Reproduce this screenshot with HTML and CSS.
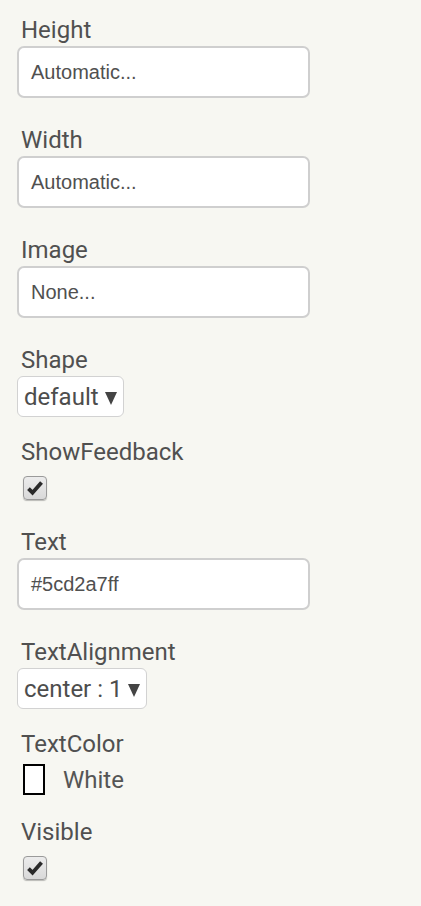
FILE: index.html
```html
<!DOCTYPE html>
<html>
<head>
<meta charset="utf-8">
<link rel="stylesheet" href="styles.css">
</head>
<body>
<div class="panel">
  <div class="prop">
    <div class="label">Height</div>
    <div class="textbox">Automatic...</div>
  </div>
  <div class="prop">
    <div class="label">Width</div>
    <div class="textbox">Automatic...</div>
  </div>
  <div class="prop">
    <div class="label">Image</div>
    <div class="textbox">None...</div>
  </div>
  <div class="prop prop-select">
    <div class="label">Shape</div>
    <div class="select">default<span class="arrow"></span></div>
  </div>
  <div class="prop">
    <div class="label">ShowFeedback</div>
    <div class="check"><svg viewBox="0 0 16 16" width="18" height="18"><path d="M2.2 8.6 L5.8 12.2 L13.8 3.2" fill="none" stroke="#2a2a2a" stroke-width="3.4" stroke-linecap="butt" stroke-linejoin="miter"/></svg></div>
  </div>
  <div class="prop">
    <div class="label">Text</div>
    <div class="textbox">#5cd2a7ff</div>
  </div>
  <div class="prop prop-select">
    <div class="label">TextAlignment</div>
    <div class="select">center : 1<span class="arrow"></span></div>
  </div>
  <div class="prop prop-color">
    <div class="label">TextColor</div>
    <div class="color"><span class="swatch"></span><span class="color-name">White</span></div>
  </div>
  <div class="prop">
    <div class="label">Visible</div>
    <div class="check"><svg viewBox="0 0 16 16" width="18" height="18"><path d="M2.2 8.6 L5.8 12.2 L13.8 3.2" fill="none" stroke="#2a2a2a" stroke-width="3.4" stroke-linecap="butt" stroke-linejoin="miter"/></svg></div>
  </div>
</div>
</body>
</html>
```
FILE: styles.css
```css
html, body {
  margin: 0;
  padding: 0;
  background: #f7f7f2;
}
body {
  width: 421px;
  height: 906px;
  overflow: hidden;
}
.panel {
  display: flex;
  flex-direction: column;
  padding: 16px 0 0 17px;
  font-family: Roboto, "Liberation Sans", sans-serif;
  color: #505050;
}
.prop {
  display: flex;
  flex-direction: column;
  align-items: flex-start;
  margin-bottom: 28px;
}
.prop-select {
  margin-bottom: 21px;
}
.prop-color {
  margin-bottom: 23px;
}
.label {
  font-size: 24px;
  line-height: 28px;
  height: 28px;
  padding-left: 4px;
  margin-bottom: 2px;
}
.textbox {
  box-sizing: border-box;
  width: 293px;
  height: 52px;
  border: 2px solid #cfcfcf;
  border-radius: 7px;
  background: #fff;
  font-family: "Liberation Sans", Arial, sans-serif;
  font-size: 20px;
  line-height: 48px;
  padding-left: 12px;
  color: #505050;
}
.select {
  box-sizing: border-box;
  height: 41px;
  border: 1px solid #d2d2d2;
  border-radius: 6px;
  background: #fff;
  font-size: 24px;
  line-height: 39px;
  padding: 1px 6px 0 6px;
  display: flex;
  align-items: center;
  color: #4d4d4d;
}
.arrow {
  width: 0;
  height: 0;
  margin-left: 6px;
  margin-top: 2px;
  border-left: 6px solid transparent;
  border-right: 6px solid transparent;
  border-top: 13px solid #444;
}
.check {
  box-sizing: border-box;
  width: 24px;
  height: 24px;
  margin-top: 8px;
  margin-left: 6px;
  border: 1px solid #9a9a9a;
  border-radius: 4px;
  background: linear-gradient(#ececec, #d9d9d9);
  box-shadow: 0 1px 1px rgba(0,0,0,0.25);
  display: flex;
  align-items: center;
  justify-content: center;
}
.check svg {
  display: block;
}
.color {
  display: flex;
  align-items: center;
  margin-top: 4px;
  padding-left: 6px;
}
.swatch {
  box-sizing: border-box;
  width: 22px;
  height: 31px;
  border: 2px solid #000;
  background: #fff;
}
.color-name {
  font-size: 24px;
  line-height: 28px;
  margin-left: 18px;
  color: #555;
}
```
